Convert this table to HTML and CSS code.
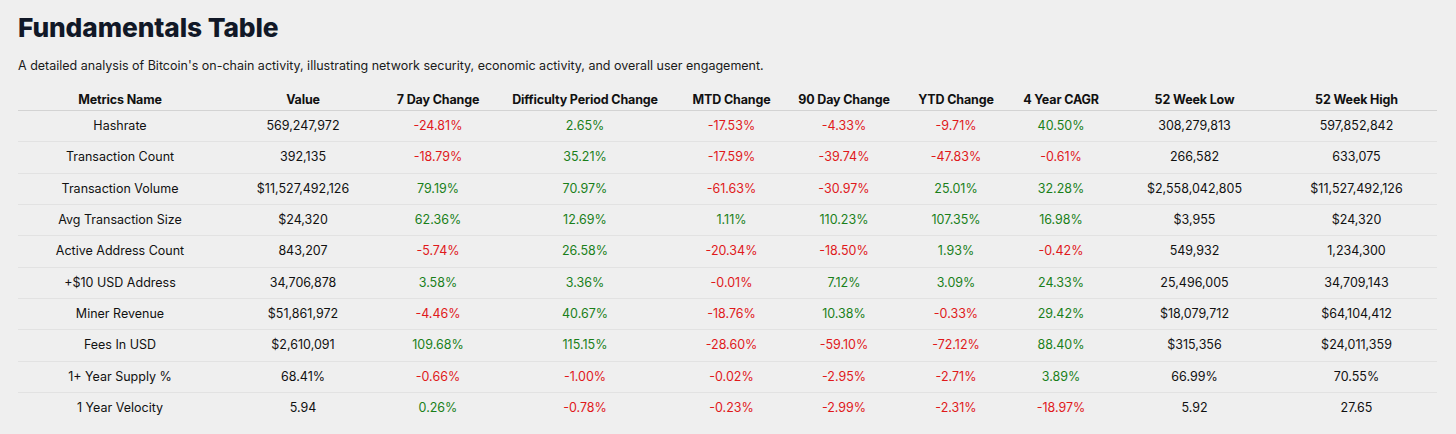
FILE: index.html
```html
<!DOCTYPE html>
<html lang="en">
<head>
<meta charset="utf-8">
<title>Fundamentals Table</title>
<link rel="stylesheet" href="styles.css">
</head>
<body>
<main class="page">
  <h1 class="title">Fundamentals Table</h1>
  <p class="subtitle">A detailed analysis of Bitcoin's on-chain activity, illustrating network security, economic activity, and overall user engagement.</p>
  <table class="fund">
    <colgroup>
      <col class="c1"><col class="c2"><col class="c3"><col class="c4"><col class="c5">
      <col class="c6"><col class="c7"><col class="c8"><col class="c9"><col class="c10">
    </colgroup>
    <thead>
      <tr>
        <th>Metrics Name</th><th>Value</th><th>7 Day Change</th><th>Difficulty Period Change</th><th>MTD Change</th>
        <th>90 Day Change</th><th>YTD Change</th><th>4 Year CAGR</th><th>52 Week Low</th><th>52 Week High</th>
      </tr>
    </thead>
    <tbody>
      <tr><td>Hashrate</td><td>569,247,972</td><td class="neg">-24.81%</td><td class="pos">2.65%</td><td class="neg">-17.53%</td><td class="neg">-4.33%</td><td class="neg">-9.71%</td><td class="pos">40.50%</td><td>308,279,813</td><td>597,852,842</td></tr>
      <tr><td>Transaction Count</td><td>392,135</td><td class="neg">-18.79%</td><td class="pos">35.21%</td><td class="neg">-17.59%</td><td class="neg">-39.74%</td><td class="neg">-47.83%</td><td class="neg">-0.61%</td><td>266,582</td><td>633,075</td></tr>
      <tr><td>Transaction Volume</td><td>$11,527,492,126</td><td class="pos">79.19%</td><td class="pos">70.97%</td><td class="neg">-61.63%</td><td class="neg">-30.97%</td><td class="pos">25.01%</td><td class="pos">32.28%</td><td>$2,558,042,805</td><td>$11,527,492,126</td></tr>
      <tr><td>Avg Transaction Size</td><td>$24,320</td><td class="pos">62.36%</td><td class="pos">12.69%</td><td class="pos">1.11%</td><td class="pos">110.23%</td><td class="pos">107.35%</td><td class="pos">16.98%</td><td>$3,955</td><td>$24,320</td></tr>
      <tr><td>Active Address Count</td><td>843,207</td><td class="neg">-5.74%</td><td class="pos">26.58%</td><td class="neg">-20.34%</td><td class="neg">-18.50%</td><td class="pos">1.93%</td><td class="neg">-0.42%</td><td>549,932</td><td>1,234,300</td></tr>
      <tr><td>+$10 USD Address</td><td>34,706,878</td><td class="pos">3.58%</td><td class="pos">3.36%</td><td class="neg">-0.01%</td><td class="pos">7.12%</td><td class="pos">3.09%</td><td class="pos">24.33%</td><td>25,496,005</td><td>34,709,143</td></tr>
      <tr><td>Miner Revenue</td><td>$51,861,972</td><td class="neg">-4.46%</td><td class="pos">40.67%</td><td class="neg">-18.76%</td><td class="pos">10.38%</td><td class="neg">-0.33%</td><td class="pos">29.42%</td><td>$18,079,712</td><td>$64,104,412</td></tr>
      <tr><td>Fees In USD</td><td>$2,610,091</td><td class="pos">109.68%</td><td class="pos">115.15%</td><td class="neg">-28.60%</td><td class="neg">-59.10%</td><td class="neg">-72.12%</td><td class="pos">88.40%</td><td>$315,356</td><td>$24,011,359</td></tr>
      <tr><td>1+ Year Supply %</td><td>68.41%</td><td class="neg">-0.66%</td><td class="neg">-1.00%</td><td class="neg">-0.02%</td><td class="neg">-2.95%</td><td class="neg">-2.71%</td><td class="pos">3.89%</td><td>66.99%</td><td>70.55%</td></tr>
      <tr><td>1 Year Velocity</td><td>5.94</td><td class="pos">0.26%</td><td class="neg">-0.78%</td><td class="neg">-0.23%</td><td class="neg">-2.99%</td><td class="neg">-2.31%</td><td class="neg">-18.97%</td><td>5.92</td><td>27.65</td></tr>
    </tbody>
  </table>
</main>
</body>
</html>
```

FILE: styles.css
```css
html, body {
  margin: 0;
  padding: 0;
  background: #efefef;
}
body {
  font-family: Inter, "Noto Sans", "Liberation Sans", sans-serif;
  color: #111;
}
.page {
  padding: 11px 18px 0 18px;
}
.title {
  margin: 0;
  font-size: 26.3px;
  line-height: 34px;
  font-weight: 800;
  color: #111827;
  letter-spacing: -0.1px;
}
.subtitle {
  margin: 13px 0 0 0;
  font-size: 12.5px;
  line-height: 16px;
  color: #1a1a1a;
}
.fund {
  margin-top: 16px;
  width: 1419px;
  table-layout: fixed;
  border-collapse: collapse;
  font-size: 12.5px;
}
.c1 { width: 204px; }
.c2 { width: 162px; }
.c3 { width: 108px; }
.c4 { width: 186px; }
.c5 { width: 107px; }
.c6 { width: 118px; }
.c7 { width: 106px; }
.c8 { width: 104px; }
.c9 { width: 163px; }
.c10 { width: 161px; }
.fund th {
  font-weight: 700;
  text-align: center;
  padding: 2px 0;
  line-height: 16px;
  color: #111;
  border-bottom: 1px solid #d3d3d3;
  white-space: nowrap;
  letter-spacing: -0.15px;
}
.fund td {
  text-align: center;
  padding: 7px 0;
  line-height: 16.33px;
  color: #111;
  border-bottom: 1px solid #e2e2e2;
  white-space: nowrap;
}
.fund tbody tr:last-child td {
  border-bottom: none;
}
.fund td.neg { color: #e0191b; }
.fund td.pos { color: #1a7f1a; }
```
